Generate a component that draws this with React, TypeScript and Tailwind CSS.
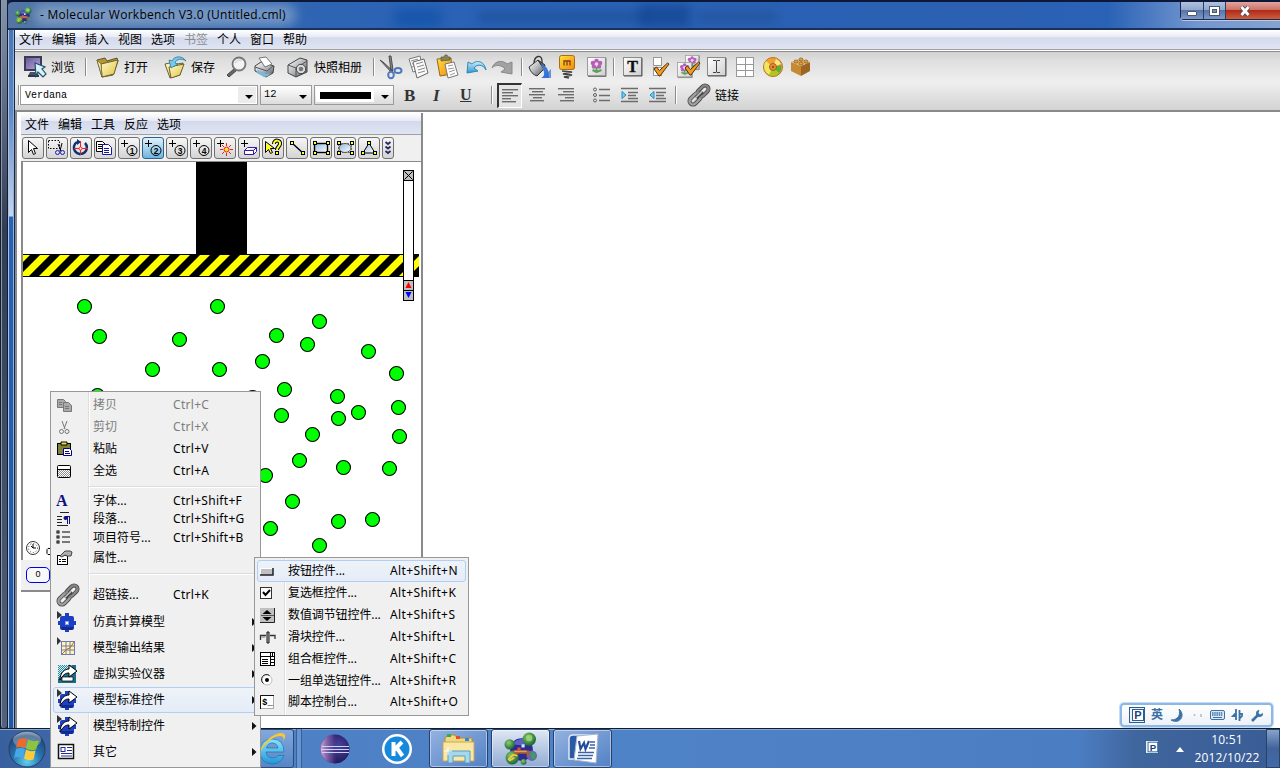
import React from "react";

type IcoProps = { w: number; h: number; children: React.ReactNode; className?: string };
const Ico = ({ w, h, children, className = "" }: IcoProps) => (
  <svg width={w} height={h} viewBox={`0 0 ${w} ${h}`} className={`block shrink-0 overflow-visible ${className}`}>
    {children}
  </svg>
);

const Defs = () => (
  <svg className="absolute h-0 w-0">
    <defs>
      <linearGradient id="folder" x1="0" y1="0" x2="1" y2="1">
        <stop offset="0" stopColor="#fffbd0" />
        <stop offset="1" stopColor="#e2c23c" />
      </linearGradient>
      <linearGradient id="metal" x1="0" y1="0" x2="1" y2="1">
        <stop offset="0" stopColor="#ffffff" />
        <stop offset="0.5" stopColor="#b5b8bc" />
        <stop offset="1" stopColor="#4c5054" />
      </linearGradient>
      <linearGradient id="purple" x1="0" y1="0" x2="1" y2="1">
        <stop offset="0" stopColor="#6a5a9c" />
        <stop offset="1" stopColor="#b7a4dc" />
      </linearGradient>
      <linearGradient id="orange" x1="0" y1="0" x2="1" y2="1">
        <stop offset="0" stopColor="#ffe23c" />
        <stop offset="1" stopColor="#ee8a10" />
      </linearGradient>
      <linearGradient id="sky" x1="0" y1="0" x2="0" y2="1">
        <stop offset="0" stopColor="#c9edfa" />
        <stop offset="1" stopColor="#2f95cf" />
      </linearGradient>
      <linearGradient id="btn" x1="0" y1="0" x2="1" y2="1">
        <stop offset="0" stopColor="#ffffff" />
        <stop offset="1" stopColor="#cfcfcf" />
      </linearGradient>
      <linearGradient id="shape" x1="0" y1="0" x2="1" y2="1">
        <stop offset="0" stopColor="#8fb7dc" />
        <stop offset="1" stopColor="#ffffff" />
      </linearGradient>
      <radialGradient id="orb" cx="0.5" cy="0.85" r="0.9">
        <stop offset="0" stopColor="#5fd0ee" />
        <stop offset="0.45" stopColor="#2473ad" />
        <stop offset="0.8" stopColor="#24497a" />
        <stop offset="1" stopColor="#a9bfd6" />
      </radialGradient>
      <radialGradient id="eclipse" cx="0.6" cy="0.4" r="0.65">
        <stop offset="0" stopColor="#4c43a0" />
        <stop offset="1" stopColor="#1d1655" />
      </radialGradient>
      <linearGradient id="eclipseEdge" x1="0" y1="0" x2="1" y2="0">
        <stop offset="0" stopColor="#d8a6d6" />
        <stop offset="0.4" stopColor="#7a5cae" stopOpacity="0.5" />
        <stop offset="0.6" stopColor="#2a2066" stopOpacity="0" />
      </linearGradient>
      <radialGradient id="green" cx="0.4" cy="0.35" r="0.7">
        <stop offset="0" stopColor="#8ad06a" />
        <stop offset="1" stopColor="#145c34" />
      </radialGradient>
      <linearGradient id="ie" x1="0" y1="0" x2="0" y2="1">
        <stop offset="0" stopColor="#8be3fb" />
        <stop offset="1" stopColor="#2196d8" />
      </linearGradient>
      <pattern id="dots" width="2" height="2" patternUnits="userSpaceOnUse">
        <rect width="1" height="1" fill="#8c8c8c" />
        <rect x="1" y="1" width="1" height="1" fill="#8c8c8c" />
      </pattern>
      <pattern id="tealDots" width="2" height="2" patternUnits="userSpaceOnUse">
        <rect width="2" height="2" fill="#d5edf2" />
        <rect width="1" height="1" fill="#2b8aa5" />
        <rect x="1" y="1" width="1" height="1" fill="#2b8aa5" />
      </pattern>
    </defs>
  </svg>
);

const Molecule = ({ size }: { size: number }) => (
  <svg width={size} height={size} viewBox="0 0 32 32" className="block shrink-0">
    <circle cx="17" cy="17" r="11" fill="#2d2a94" />
    <path d="M8 12a11 11 0 0 1 16-3l-4 4z" fill="#5c62c8" />
    <circle cx="5.500" cy="12" r="5" fill="url(#green)" />
    <circle cx="24.500" cy="7" r="6.500" fill="url(#green)" />
    <circle cx="8" cy="25" r="6.500" fill="url(#green)" />
    <circle cx="27" cy="23" r="5" fill="#6a62b4" />
    <path d="M25 21l3-2 3 3-1 5-3-1z" fill="#3f9c64" />
    <circle cx="19" cy="29" r="2.800" fill="url(#green)" />
    <path d="M8 18h16l2 2h-2v4h-2v-3h-10v3h-2v-4z" fill="#a8602c" />
    <path d="M10 18h12v1.500H10z" fill="#e0a050" />
    <rect x="13" y="15" width="3" height="3" fill="#e54a4a" />
    <rect x="17" y="12" width="3" height="3" fill="#d8e8ff" />
    <path d="M4 27l5-5 4 1M5 28l5-3" stroke="#f2d040" strokeWidth="1.500" fill="none" />
    <circle cx="24.500" cy="6" r="3" fill="#a8dc80" opacity=".7" />
  </svg>
);

const Link = () => (
  <Ico w={24} h={24}>
    <g transform="rotate(-45 12 12)" fill="none">
      <rect x="0" y="8.500" width="13" height="7" rx="3.500" stroke="#4a4a4a" strokeWidth="4" />
      <rect x="11" y="8.500" width="13" height="7" rx="3.500" stroke="#4a4a4a" strokeWidth="4" />
      <rect x="0" y="8.500" width="13" height="7" rx="3.500" stroke="#a0a0a0" strokeWidth="2.400" />
      <rect x="11" y="8.500" width="13" height="7" rx="3.500" stroke="#868686" strokeWidth="2.400" />
      <path d="M8 12h9" stroke="#3e3e3e" strokeWidth="3.400" />
      <path d="M8 11.500h9" stroke="#c4c4c4" strokeWidth="1.500" />
    </g>
  </Ico>
);

const Sep = () => (
  <div className="flex h-[18px]">
    <div className="w-px bg-[#8a8a8a]" />
    <div className="w-px bg-white" />
  </div>
);

const FlowerArt = () => (
  <>
    <rect x=".5" y=".5" width="18" height="18" fill="url(#btn)" stroke="#9b9b9b" />
    <path d="M19 1v18.500H1" stroke="#777" fill="none" />
    <path d="M9.500 10v6M9.500 15l5-2M9.500 15l-4-2" stroke="#5aa356" strokeWidth="2" fill="none" />
    <g fill="#b65fb8">
      <circle cx="9.500" cy="4" r="2.300" />
      <circle cx="6" cy="6" r="2.300" />
      <circle cx="13" cy="6" r="2.300" />
      <circle cx="7" cy="9.500" r="2.300" />
      <circle cx="12" cy="9.500" r="2.300" />
    </g>
    <circle cx="9.500" cy="7" r="1.800" fill="#f0d8f0" />
  </>
);

const Check = () => (
  <path d="M2 12l2.500-2 3 3.500 8-7.500 1.500 1-9 12H7z" fill="#f59a18" stroke="#4a3414" strokeWidth="1" />
);

const song = "font-['Liberation_Sans','Noto_Sans_CJK_SC',sans-serif]";

const MainToolbar = () => (
  <div className="flex h-[30px] items-center pl-[8px] text-[12px] text-black">
    <div className="w-[28px] shrink-0">
      <Ico w={24} h={24}>
        <path d="M1 1h18v15H1z" fill="#393c52" />
        <path d="M3 3h14v11H3z" fill="url(#purple)" />
        <path d="M7 17h7l2 4H5z" fill="#4b5164" />
        <path d="M5 20h11v2H5z" fill="#30364a" />
        <path d="M12 8l10 4-3 2 4 5-3 3-5-5-2 4z" fill="#d6f2fa" stroke="#23506c" strokeWidth="1.200" />
      </Ico>
    </div>
    <span className="w-[34px] shrink-0 pt-[2px]">浏览</span>
    <div className="w-[11px] shrink-0"><Sep /></div>
    <div className="w-[28px] shrink-0">
      <Ico w={24} h={22}>
        <path d="M1 4l8-2 2 3 10-3 1 3-5 14-11 2z" fill="#b8962c" stroke="#5c5328" />
        <path d="M5 8l17-4-4 14-12 3z" fill="url(#folder)" stroke="#6b6030" />
        <path d="M1 4l5 17-1-13z" fill="#f7eeb0" stroke="#6b6030" strokeWidth=".7" />
      </Ico>
    </div>
    <span className="w-[40px] shrink-0 pt-[2px]">打开</span>
    <div className="w-[27px] shrink-0">
      <Ico w={24} h={22}>
        <path d="M1 8l5-1 2 2 11-2-3 12-10 3z" fill="url(#folder)" stroke="#6b6030" />
        <path d="M5 11l15-3-4 11-9 3z" fill="url(#folder)" stroke="#6b6030" />
        <path d="M22 5C18-1 10 0 8 5l-3-1 2 8 7-4-3-1c1-4 7-5 11-2z" fill="#7cc8e8" stroke="#2878a0" strokeWidth=".8" />
      </Ico>
    </div>
    <span className="w-[35px] shrink-0 pt-[2px]">保存</span>
    <div className="w-[28px] shrink-0">
      <Ico w={22} h={22}>
        <path d="M9 12l-8 7 2 2 8-7z" fill="#666" stroke="#444" />
        <circle cx="13" cy="8" r="6.500" fill="#f3f3f3" stroke="#777" strokeWidth="1.800" />
        <path d="M9 7q3-4 7-3" stroke="#c7c7c7" fill="none" />
      </Ico>
    </div>
    <div className="w-[33px] shrink-0">
      <Ico w={22} h={22}>
        <path d="M1 10l6-4 13 4-1 7-7 4-11-6z" fill="url(#metal)" stroke="#444" />
        <path d="M5 2l7-1 6 7-7 3z" fill="#fff" stroke="#777" />
        <path d="M1 11l12 4 6-5" fill="none" stroke="#555" />
        <path d="M4 14l8 4 5-1-3 3-4 1-7-4z" fill="#7bb7d8" />
      </Ico>
    </div>
    <div className="w-[27px] shrink-0">
      <Ico w={22} h={22}>
        <path d="M1 9L13 2l7 2v12l-11 5-8-4z" fill="url(#metal)" stroke="#444" />
        <path d="M1 9l8 3v9M9 12l11-7" stroke="#555" fill="none" />
        <circle cx="14" cy="13" r="4.700" fill="#ddd" stroke="#444" />
        <circle cx="14" cy="13" r="2.300" fill="#777" />
      </Ico>
    </div>
    <span className="w-[59px] shrink-0 pt-[2px]">快照相册</span>
    <div className="w-[6px] shrink-0"><Sep /></div>
    <div className="w-[29px] shrink-0">
      <Ico w={24} h={24}>
        <path d="M1 5l3 2 10 9-2 1zM10 1l2 0 2 14-2 1z" fill="#888" stroke="#444" strokeWidth=".9" />
        <ellipse cx="12" cy="20" rx="2.800" ry="3.300" fill="none" stroke="#5078bc" strokeWidth="2" />
        <ellipse cx="19" cy="15.500" rx="3.500" ry="2.500" fill="none" stroke="#5078bc" strokeWidth="2" />
      </Ico>
    </div>
    <div className="w-[28px] shrink-0">
      <Ico w={22} h={24}>
        <path d="M1 4l11-3 3 13-10 3z" fill="#fafafa" stroke="#777" />
        <path d="M5 7l11-3 4 14-11 5z" fill="#fafafa" stroke="#666" />
        <path d="M8 9l7-2M9 12l7-2M10 15l7-2M10 18l7-2M3 6l7-2M4 9l2-1M4 12l2-1" stroke="#888" />
      </Ico>
    </div>
    <div className="w-[30px] shrink-0">
      <Ico w={24} h={24}>
        <path d="M1 4l14-1 1 16-12 2z" fill="url(#orange)" stroke="#9a6418" />
        <path d="M5 2l3 0 1-2 2 0 1 2 2 0v3l-9 1z" fill="#8a8450" stroke="#555" strokeWidth=".7" />
        <path d="M9 9l9-2 4 13-10 3z" fill="#fff" stroke="#777" />
        <path d="M12 11l5-1M12 14l6-1M13 17l6-2M14 20l5-2" stroke="#999" />
      </Ico>
    </div>
    <div className="w-[25px] shrink-0">
      <Ico w={21} h={16}>
        <path d="M20 11C18 1 10 1 6 5L2 3 1 14l11-2-4-3c3-4 9-4 12 2z" fill="url(#sky)" stroke="#2989b8" />
      </Ico>
    </div>
    <div className="w-[30px] shrink-0">
      <Ico w={22} h={16}>
        <path d="M1 9C4 1 12 1 16 5l5-2v12l-11-2 4-3C11 6 4 5 1 9z" fill="#a2a2a2" stroke="#898989" />
      </Ico>
    </div>
    <div className="w-[7px] shrink-0"><Sep /></div>
    <div className="w-[31px] shrink-0">
      <Ico w={24} h={24}>
        <path d="M6 9C6 0 14-1 14 6v5" fill="none" stroke="#333" strokeWidth="1.300" />
        <path d="M1 12l9-7 6 9-7 7q-6-2-8-9z" fill="url(#metal)" stroke="#333" />
        <path d="M10 5l7 5-1 4z" fill="#666" stroke="#333" />
        <path d="M13 9l5 3q3 3 3 11h-8q5-2 2-9z" fill="#3c78d8" />
        <path d="M23 14v9h-9z" fill="#2f6ed4" opacity=".7" />
      </Ico>
    </div>
    <div className="w-[28px] shrink-0">
      <Ico w={16} h={26}>
        <rect x=".5" y="1.500" width="15" height="14" rx="2" fill="url(#orange)" stroke="#a96a10" />
        <path d="M5 11.500V7h3v4.500M8 7h3v4.500" stroke="#8a3a10" strokeWidth="1.300" fill="none" />
        <path d="M3 17l10 1-9 2 9 1-8 2 5 1" stroke="#444" fill="none" strokeWidth="1.500" />
      </Ico>
    </div>
    <div className="w-[26px] shrink-0"><Ico w={20} h={20}><FlowerArt /></Ico></div>
    <div className="w-[10px] shrink-0"><Sep /></div>
    <div className="w-[29px] shrink-0">
      <Ico w={20} h={20}>
        <rect x=".5" y=".5" width="18" height="18" fill="url(#btn)" stroke="#8a8a8a" />
        <path d="M19 1v18H1" stroke="#555" fill="none" />
        <text x="9.500" y="15" fontSize="16" fontWeight="700" textAnchor="middle" fontFamily="Liberation Serif, serif" fill="#111" stroke="#111" strokeWidth=".4">T</text>
      </Ico>
    </div>
    <div className="w-[25px] shrink-0">
      <Ico w={19} h={20}>
        <rect x="1.500" y=".5" width="8" height="8" fill="#fff" stroke="#999" />
        <rect x="1.500" y="10.500" width="8" height="8" fill="#fff" stroke="#999" />
        <Check />
      </Ico>
    </div>
    <div className="w-[30px] shrink-0">
      <Ico w={24} h={22}>
        <g transform="translate(8 -1) scale(.75)"><FlowerArt /></g>
        <g transform="translate(0 6) scale(.8)"><FlowerArt /></g>
        <g transform="translate(6 0)"><Check /></g>
      </Ico>
    </div>
    <div className="w-[29px] shrink-0">
      <Ico w={20} h={20}>
        <rect x=".5" y=".5" width="18" height="18" fill="url(#btn)" stroke="#8a8a8a" />
        <path d="M19 1v18H1" stroke="#555" fill="none" />
        <path d="M6 3.500h3l.5 1 .5-1h3M6 15.500h3l.5-1 .5 1h3M9.500 4v11" stroke="#444" fill="none" />
      </Ico>
    </div>
    <div className="w-[26px] shrink-0">
      <Ico w={18} h={20} className="[shape-rendering:crispEdges]">
        <rect x=".5" y=".5" width="17" height="19" fill="#fff" stroke="#999" />
        <path d="M9 0v20M0 7h18M0 13h18" stroke="#999" />
      </Ico>
    </div>
    <div className="w-[28px] shrink-0">
      <Ico w={22} h={22}>
        <circle cx="11" cy="11" r="9.500" fill="#f0a030" stroke="#b27818" />
        <path d="M11 11L4 5a9 9 0 0 0 4 14z" fill="#f0e460" />
        <path d="M11 11l-4 8q7 2 10-2z" fill="#a4cc20" />
        <path d="M11 11l8-2q1 5-2 8z" fill="#58b038" />
        <path d="M11 11l3-8q4 2 5 5z" fill="#ffe890" />
        <circle cx="11" cy="11" r="3.500" fill="#e69030" stroke="#a3601c" />
        <circle cx="11" cy="11" r="1.300" fill="#a05018" />
      </Ico>
    </div>
    <Ico w={22} h={20}>
      <path d="M1 5l10 4v10L1 14z" fill="#c68a35" />
      <path d="M11 9l9-4v9l-9 5z" fill="#9c6522" />
      <path d="M1 5l9-3 10 3-9 4z" fill="#e5b462" />
      <g fill="#dca650" stroke="#8c5b20" strokeWidth=".8">
        <ellipse cx="6" cy="4.500" rx="2" ry="1.500" />
        <ellipse cx="11" cy="2.500" rx="2" ry="1.500" />
        <ellipse cx="11" cy="6.500" rx="2" ry="1.500" />
        <ellipse cx="16" cy="4.500" rx="2" ry="1.500" />
      </g>
    </Ico>
  </div>
);

const Caret = () => (
  <Ico w={8} h={4}><path d="M0 0h8l-4 4z" fill="#000" /></Ico>
);

const Lines = ({ kind }: { kind: "left" | "center" | "right" }) => (
  <Ico w={17} h={16}>
    <g fill="#6c6c6c">
      {[16, 11, 16, 9, 14].map((w, i) => (
        <rect key={i} x={kind === "left" ? 0 : kind === "center" ? Math.floor((17 - w) / 2) : 17 - w} y={1 + i * 3} width={w} height="1.400" />
      ))}
    </g>
  </Ico>
);

const FormatToolbar = () => (
  <div className="flex h-[28px] items-center pb-[2px] pl-[3px] text-[12px] text-black">
    <div className="mr-px h-[20px] w-px bg-[#8f8f8f] shadow-[1px_0_0_#fff]" />
    <div className="mr-[2px] flex h-[20px] w-[238px] items-center border border-[#9a9a9a] bg-[#ececec] p-px shadow-[inset_0_0_0_1px_#fff]">
      <div className="flex h-[16px] w-[216px] items-center bg-white pl-[3px] font-['Liberation_Mono',monospace] text-[10px]">Verdana</div>
      <div className="mt-[3px] ml-[7px]"><Caret /></div>
    </div>
    <div className="mr-[2px] flex h-[20px] w-[52px] items-center border border-[#9a9a9a] bg-gradient-to-b from-white to-[#dcdcdc] pl-[3px]">
      <div className="w-[35px] font-['Liberation_Mono',monospace] text-[10.500px]">12</div>
      <div className="mt-[3px]"><Caret /></div>
    </div>
    <div className="mr-[10px] flex h-[20px] w-[80px] items-center border border-[#9a9a9a] bg-gradient-to-b from-white to-[#dcdcdc] p-px">
      <div className="flex h-[14px] w-[58px] items-center bg-white pl-[4px]"><div className="h-[7px] w-[51px] bg-black" /></div>
      <div className="mt-[3px] ml-[7px]"><Caret /></div>
    </div>
    <span className="w-[29px] font-['Liberation_Serif',serif] text-[17px] leading-none font-bold text-[#333]">B</span>
    <span className="w-[27px] font-['Liberation_Serif',serif] text-[17px] leading-none font-bold text-[#333] italic">I</span>
    <span className="w-[31px] font-['Liberation_Serif',serif] text-[16px] leading-none font-bold text-[#333] underline">U</span>
    <div className="w-[6px]"><Sep /></div>
    <div className="mr-[7px] flex h-[25px] w-[25px] items-center border-t-2 border-r border-b border-l-2 border-t-[#333] border-r-white border-b-white border-l-[#333] bg-[#e4e4e4] pl-[3px]"><Lines kind="left" /></div>
    <div className="w-[28px]"><Lines kind="center" /></div>
    <div className="w-[36px]"><Lines kind="right" /></div>
    <div className="w-[28px]">
      <Ico w={17} h={16}>
        <g fill="none" stroke="#5f5f5f"><circle cx="2" cy="2.500" r="1.500" /><circle cx="2" cy="8" r="1.500" /><circle cx="2" cy="13.500" r="1.500" /></g>
        <path d="M6 2.500h11M6 8.500h11M6 13.500h11" stroke="#6c6c6c" strokeWidth="1.400" />
      </Ico>
    </div>
    <div className="w-[28px]">
      <Ico w={17} h={16}>
        <path d="M0 1.500h17M7 5.500h10M7 8.500h8M7 11.500h10M0 14.500h17" stroke="#6c6c6c" strokeWidth="1.300" />
        <path d="M1 4.500v7l4-3.500z" fill="#7ccbf0" stroke="#1d8cc8" />
      </Ico>
    </div>
    <div className="w-[26px]">
      <Ico w={17} h={16}>
        <path d="M0 1.500h17M7 5.500h10M7 8.500h8M7 11.500h10M0 14.500h17" stroke="#6c6c6c" strokeWidth="1.300" />
        <path d="M5 4.500v7l-4-3.500z" fill="#7ccbf0" stroke="#1d8cc8" />
      </Ico>
    </div>
    <div className="w-[12px]"><Sep /></div>
    <div className="w-[28px]"><Link /></div>
    <span className="pt-[2px]">链接</span>
  </div>
);

const Knob = ({ x, y }: { x: number; y: number }) => <rect x={x} y={y} width="3" height="3" fill="#ffff40" stroke="#000" />;

const AddAtom = ({ n }: { n: number }) => (
  <>
    <path d="M2 5.500h7M5.500 2v7" stroke="#000" />
    <circle cx="13" cy="12.500" r="5" fill="none" stroke="#000" />
    <text x="13" y="15.500" fontSize="8.500" fontWeight="700" textAnchor="middle" fontFamily="Liberation Sans, sans-serif">{n}</text>
  </>
);

const tools: React.ReactNode[] = [
  <path d="M5.500 2.500v12l3-3 2 5 2-1-2-5h4z" fill="#fff" stroke="#000" />,
  <>
    <path d="M1.500 2.500h11v8h-11z" fill="none" stroke="#000" strokeDasharray="1.500 1.500" />
    <path d="M11 6l3 7M15 5l-2 8" stroke="#000" />
    <circle cx="10.500" cy="14.500" r="2" fill="none" stroke="#1818b0" /><circle cx="15.500" cy="14.500" r="2" fill="none" stroke="#1818b0" />
  </>,
  <>
    <path d="M6 4a6.500 6.500 0 1 0 8 1" fill="none" stroke="#103070" strokeWidth="2.500" />
    <path d="M6 1v6l4-3z" fill="#103070" />
    <path d="M9.500 3v14M3 10.500h14" stroke="#f02020" /><circle cx="9.500" cy="10.500" r="1.500" fill="#fff" stroke="#f02020" />
  </>,
  <>
    <path d="M1.500 3.500h6l3 3v7h-9z" fill="#fff" stroke="#000" /><path d="M3 6.500h5M3 8.500h5M3 10.500h5" stroke="#000" />
    <path d="M7.500 6.500h6l3 3v7h-9z" fill="#fff" stroke="#1818a0" /><path d="M9 10.500h5M9 12.500h5M9 14.500h5" stroke="#1818a0" />
  </>,
  <AddAtom n={1} />,
  <AddAtom n={2} />,
  <AddAtom n={3} />,
  <AddAtom n={4} />,
  <>
    <path d="M2 5.500h7M5.500 2v7" stroke="#000" /><circle cx="11.500" cy="11.500" r="2.500" fill="#ffe030" stroke="#f02020" />
    <path d="M11.500 5v3M11.500 15v3M5 11.500h3M15 11.500h3M7 7l2 2M16 7l-2 2M7 16l2-2M16 16l-2-2" stroke="#f02020" />
  </>,
  <>
    <path d="M2 5.500h7M5.500 2v7" stroke="#000" />
    <path d="M5.500 12.500l3-3h9v4l-3 3h-9zM5.500 12.500h9l3-3M14.500 12.500v4" fill="#fff" stroke="#3818a8" />
  </>,
  <>
    <path d="M2.500 3.500v11l3-3 2 4 2-1-2-4h4z" fill="#ffff30" stroke="#000" />
    <path d="M11 6c0-5 7-4 6 0 0 2-3 3-3 6" fill="none" stroke="#000" strokeWidth="4" /><path d="M11 6c0-5 7-4 6 0 0 2-3 3-3 6" fill="none" stroke="#ffff30" strokeWidth="2" />
    <rect x="12.500" y="13.500" width="3" height="3" fill="#ffff30" stroke="#000" />
  </>,
  <><path d="M5 5l12 11" stroke="#000" strokeWidth="1.500" /><Knob x={3.500} y={3.500} /><Knob x={14.500} y={13.500} /></>,
  <>
    <rect x="3.500" y="5.500" width="13" height="9" fill="url(#shape)" stroke="#000" strokeWidth="1.400" />
    <Knob x={2.500} y={3.500} /><Knob x={15.500} y={3.500} /><Knob x={2.500} y={13.500} /><Knob x={15.500} y={13.500} />
  </>,
  <>
    <rect x="3.500" y="5.500" width="13" height="9" fill="none" stroke="#000" strokeDasharray="1 2" /><ellipse cx="10" cy="10" rx="6" ry="4.500" fill="url(#shape)" stroke="#555" />
    <Knob x={2.500} y={3.500} /><Knob x={15.500} y={3.500} /><Knob x={2.500} y={13.500} /><Knob x={15.500} y={13.500} />
  </>,
  <>
    <path d="M10 5l6 10H4z" fill="url(#shape)" stroke="#000" /><Knob x={8.500} y={3.500} /><Knob x={2.500} y={13.500} /><Knob x={14.500} y={13.500} />
  </>,
];

const atoms: [number, number][] = [
  [84, 306], [217, 306], [319, 321], [99, 336], [179, 339], [276, 335], [307, 344], [368, 351], [262, 361], [152, 369],
  [219, 369], [396, 373], [284, 389], [337, 396], [97, 395], [252, 397], [398, 407], [358, 412], [281, 415], [338, 418],
  [312, 434], [399, 436], [299, 460], [265, 475], [343, 467], [389, 468], [292, 501], [270, 528], [338, 521], [372, 519], [319, 545],
];

const Simulation = () => (
  <svg width="398" height="398" viewBox="23 162 398 398" className="block">
    <defs>
      <clipPath id="beam"><rect x="23" y="254" width="396" height="23" /></clipPath>
    </defs>
    <rect x="196" y="162" width="51" height="93" fill="#000" />
    <rect x="23" y="254" width="396" height="23" fill="#000" />
    <g clipPath="url(#beam)" fill="#ffff00">
      {Array.from({ length: 22 }, (_, i) => {
        const x = 20 + i * 20;
        return <path key={i} d={`M${x} 255h10l-21 21h-10z`} />;
      })}
    </g>
    {atoms.map(([x, y], i) => (
      <circle key={i} cx={x + 0.5} cy={y + 0.5} r="7" fill="#00ff00" stroke="#000" strokeWidth="1.100" />
    ))}
    <g stroke="#000">
      <rect x="403.500" y="170.500" width="10" height="130" fill="#fff" />
      <rect x="403.500" y="170.500" width="10" height="10" fill="#c0c0c0" />
      <path d="M404.500 171.500l8 8M412.500 171.500l-8 8" />
      <rect x="403.500" y="280.500" width="10" height="10" fill="#c0c0c0" />
      <rect x="403.500" y="290.500" width="10" height="10" fill="#c0c0c0" />
    </g>
    <path d="M408.500 282l3 6h-6z" fill="#f00" />
    <path d="M408.500 298l3-6h-6z" fill="#00f" />
    <circle cx="33" cy="548" r="6.500" fill="#fff" stroke="#333" />
    <circle cx="33" cy="548" r="4.500" fill="none" stroke="#444" strokeDasharray="1 2" />
    <path d="M33 544v4h3M33 548l-2-2" stroke="#000" fill="none" />
    <path d="M50 548.500h-2l-1 1v4l1 1h2" stroke="#000" fill="none" />
  </svg>
);

const menuGradient = "bg-[linear-gradient(to_bottom,#ffffff_0,#e6eaf4_38%,#d4daec_40%,#e0e5f3_100%)]";

const ModelPanel = () => (
  <div className="mt-px flex h-[479px] w-[402px] flex-col border-r-2 border-b-2 border-r-[#8a8a8a] border-b-[#8a8a8a] bg-[#f0f0f0]">
    <div className={`flex h-[22px] shrink-0 items-center border-b border-[#a0a0a0] pt-[3px] pl-[4px] text-[12px] ${menuGradient}`}>
      {["文件", "编辑", "工具", "反应", "选项"].map((t) => <span key={t} className="w-[33px]">{t}</span>)}
    </div>
    <div className="flex h-[26px] shrink-0 items-center gap-[2px] pl-[1px]">
      {tools.map((t, i) => (
        <div key={i} className={`h-[22px] w-[22px] shrink-0 rounded-[3px] border ${i === 5 ? "border-[#2c628b] bg-gradient-to-b from-[#dff1fb] to-[#6db5dd]" : "border-[#707070] bg-gradient-to-b from-[#f6f6f6] to-[#d4d4d4]"}`}>
          <Ico w={20} h={20}>{t}</Ico>
        </div>
      ))}
      <div className="h-[22px] w-[12px] shrink-0 rounded-[3px] border border-[#707070] bg-gradient-to-b from-[#f6f6f6] to-[#d4d4d4]">
        <Ico w={10} h={20}><path d="M2.500 4l2.500 2 2.500-2M2.500 8.500l2.500 2 2.500-2M2.500 13l2.500 2 2.500-2" stroke="#262660" strokeWidth="1.800" fill="none" /></Ico>
      </div>
    </div>
    <div className="h-[399px] shrink-0 border-t border-l-2 border-[#8a8a8a] bg-white"><Simulation /></div>
    <div className="flex flex-1 items-center pl-[5px]">
      <div className="flex h-[16px] w-[24px] items-center justify-center rounded-[5px] border border-[#0000f0] bg-[#f8f8f8] text-[9px]">0</div>
      <div className="h-px w-[10px] bg-[#0000f0]" />
    </div>
  </div>
);

const Gear = () => (
  <>
    <path d="M1 0v8l5-4z" fill="#333" />
    <g fill="#1c3fc4">
      <rect x="4" y="5" width="14" height="14" rx="2" />
      <rect x="9" y="2" width="4" height="19" />
      <rect x="2" y="10" width="18" height="4" />
    </g>
    <path d="M5 16h13l-2 3H6z" fill="#102a90" />
  </>
);
const CurveArrow = () => <path d="M4 17c0-8 5-11 9-11V2l8 6-8 6v-4c-4 0-6 2-9 7z" fill="#fff" stroke="#000" />;

const menuIcons: Record<string, React.ReactNode> = {
  copy: <g stroke="#777" fill="#aaa"><path d="M1.500 2.500h6l2 2v6h-8z" /><path d="M7.500 5.500h5l3 3v6h-8z" /><path d="M9 9.500h4M9 11.500h4M3 5.500h3M3 7.500h3" /></g>,
  cut: <g stroke="#777" fill="none"><path d="M6 2l3 8M11 2L8 10" /><circle cx="5.500" cy="12.500" r="2" /><circle cx="11" cy="12.500" r="2" /></g>,
  paste: <><rect x="1.500" y="2.500" width="13" height="11" fill="#808038" stroke="#000" /><path d="M5 1h6v3H5z" fill="#f0e040" stroke="#000" /><path d="M7.500 7.500h6l2 2v5h-8z" fill="#fff" stroke="#00008b" /><path d="M9 10.500h4M9 12.500h5" stroke="#00008b" /></>,
  all: <><rect x="1.500" y="2.500" width="13" height="12" rx="1" fill="#fff" stroke="#000" /><rect x="2" y="7" width="12" height="7" fill="url(#dots)" /><path d="M2 6.500h12" stroke="#000" /></>,
  font: <text x="0" y="14" fontSize="16" fontWeight="700" fontFamily="Liberation Serif, serif" fill="#101080">A</text>,
  para: <><path d="M4 1.500h9M1 5.500h5M1 8.500h5M1 11.500h5M1 14.500h11" stroke="#222" /><path d="M13.500 5v8M11.500 5v8M14 5.500H9" stroke="#101080" /><circle cx="9.500" cy="7" r="2" fill="#101080" /></>,
  bullets: <g stroke="#000" fill="#fff"><rect x="1" y="2" width="2" height="2" /><rect x="1" y="7" width="2" height="2" /><rect x="1" y="12" width="2" height="2" /><path d="M6 3h8M6 8h8M6 13h8" /></g>,
  props: <><rect x="1.500" y="6.500" width="10" height="9" fill="#fff" stroke="#000" /><path d="M3 10.500h2M6 10.500h4M3 12.500h2M6 12.500h4" stroke="#000" /><path d="M4 7l5-5h5l2 1-1 4h-4l-2-1-3 2z" fill="#b0b0b0" stroke="#444" /></>,
  gear: <><Gear /><rect x="9.500" y="10.500" width="3" height="3" fill="#fff" stroke="#90a0e0" /></>,
  grid: <><path d="M1 0v8l4-4z" fill="#333" /><rect x="5.500" y="4.500" width="13" height="13" fill="#fff4b8" stroke="#7078b0" /><path d="M10 5v12M14 5v12M6 9h12M6 13h12" stroke="#7078b0" /><path d="M6 17l5-5 3-1 4-6" stroke="#b87010" fill="none" /></>,
  instrument: <><rect x="2" y="2" width="18" height="18" fill="#1c6c8c" /><path d="M2 2h14L2 16z" fill="url(#tealDots)" /><path d="M6 14h11v4H6z" fill="#fff" stroke="#000" strokeWidth=".7" /><CurveArrow /></>,
  widget: <><Gear /><CurveArrow /></>,
  doc: <><rect x="2.500" y="3.500" width="15" height="14" fill="#fffff0" stroke="#111" strokeWidth="1.500" /><rect x="5" y="6.500" width="4" height="4" fill="none" stroke="#2028b0" /><path d="M11 6.500h5M11 9.500h5M5 12.500h11M5 15h11" stroke="#2028b0" /></>,
};

type Row = { icon?: string; label?: string; key?: string; h: string; off?: boolean; sub?: boolean; hot?: boolean; line?: boolean };
const contextRows: Row[] = [
  { icon: "copy", label: "拷贝", key: "Ctrl+C", h: "h-[22px]", off: true },
  { icon: "cut", label: "剪切", key: "Ctrl+X", h: "h-[22px]", off: true },
  { icon: "paste", label: "粘贴", key: "Ctrl+V", h: "h-[22px]" },
  { icon: "all", label: "全选", key: "Ctrl+A", h: "h-[22px]" },
  { line: true, h: "h-[9px]" },
  { icon: "font", label: "字体...", key: "Ctrl+Shift+F", h: "h-[19px]" },
  { icon: "para", label: "段落...", key: "Ctrl+Shift+G", h: "h-[18px]" },
  { icon: "bullets", label: "项目符号...", key: "Ctrl+Shift+B", h: "h-[19px]" },
  { icon: "props", label: "属性...", h: "h-[21px]" },
  { line: true, h: "h-[12px]" },
  { icon: "link", label: "超链接...", key: "Ctrl+K", h: "h-[29px]" },
  { icon: "gear", label: "仿真计算模型", h: "h-[26px]", sub: true },
  { icon: "grid", label: "模型输出结果", h: "h-[26px]", sub: true },
  { icon: "instrument", label: "虚拟实验仪器", h: "h-[26px]", sub: true },
  { icon: "widget", label: "模型标准控件", h: "h-[26px]", sub: true, hot: true },
  { icon: "widget", label: "模型特制控件", h: "h-[26px]", sub: true },
  { icon: "doc", label: "其它", h: "h-[26px]", sub: true },
];

const hotRow = "rounded-[3px] border-[#aecff7] bg-gradient-to-b from-[#eff3f9] to-[#e4ecf7]";
const ui = "font-['Noto_Sans','Noto_Sans_CJK_SC',sans-serif] text-[12px] leading-none";

const ContextMenu = () => (
  <div className={`absolute top-[391px] left-[50px] flex h-[377px] w-[211px] flex-col border border-[#979797] bg-[#f0f0f0] bg-[linear-gradient(to_right,transparent_37px,#dedede_37px,#dedede_38px,#fff_38px,#fff_39px,transparent_39px)] px-[2px] pt-[2px] text-black ${ui}`}>
    {contextRows.map((r, i) =>
      r.line ? (
        <div key={i} className={`flex shrink-0 items-center pl-[36px] ${r.h}`}><div className="h-[2px] flex-1 border-t border-b border-t-[#dcdcdc] border-b-white" /></div>
      ) : (
        <div key={i} className={`flex shrink-0 items-center border pl-[2px] ${r.h} ${r.hot ? hotRow : "border-transparent"} ${r.off ? "text-[#7d7d7d]" : ""}`}>
          <div className="flex w-[37px] shrink-0 items-center">
            {r.icon === "link" ? <Link /> : r.sub ? <Ico w={22} h={22}>{menuIcons[r.icon!]}</Ico> : <Ico w={17} h={17}>{menuIcons[r.icon!]}</Ico>}
          </div>
          <span className="w-[80px] shrink-0 whitespace-nowrap">{r.label}</span>
          <span className="flex-1 tracking-[0.300px] whitespace-nowrap">{r.key}</span>
          {r.sub && <Ico w={5} h={8}><path d="M0 0v8l4.500-4z" fill="#111" /></Ico>}
        </div>
      ),
    )}
  </div>
);

const subRows: { label: string; key: string; h: string; icon: React.ReactNode }[] = [
  { label: "按钮控件...", key: "Alt+Shift+N", h: "h-[22px]", icon: <><rect x="2" y="5" width="12" height="7" fill="#c0c0c0" /><path d="M1.500 12V5.500h12" stroke="#fff" fill="none" /><path d="M14 5v7H1" stroke="#222" fill="none" strokeWidth="1.500" /></> },
  { label: "复选框控件...", key: "Alt+Shift+K", h: "h-[22px]", icon: <><rect x="1.500" y="2.500" width="11" height="11" fill="#fff" stroke="#333" /><path d="M4 7l2.500 3L11 5" stroke="#000" strokeWidth="2" fill="none" /></> },
  { label: "数值调节钮控件...", key: "Alt+Shift+S", h: "h-[22px]", icon: <><rect x="1" y="1" width="15" height="15" fill="#c0c0c0" /><path d="M15.500 1v14.500H1" stroke="#222" fill="none" /><path d="M8 3l4.500 4h-9zM8 14l4.500-4h-9z" fill="#000" /><path d="M2 8.500h13" stroke="#555" /></> },
  { label: "滑块控件...", key: "Alt+Shift+L", h: "h-[22px]", icon: <><path d="M1.500 11V6.500H7M11 6.500h5V10" stroke="#333" fill="none" strokeWidth="1.300" /><rect x="2" y="7" width="4" height="2" fill="#aaa" /><path d="M8 3v11h2V3z" fill="#bbb" stroke="#111" /></> },
  { label: "组合框控件...", key: "Alt+Shift+C", h: "h-[22px]", icon: <><rect x="1.500" y="1.500" width="14" height="13" fill="#fff" stroke="#000" /><path d="M1 5.500h14M11.500 2v13M3 8.500h6M3 10.500h6M3 12.500h6M13.500 2v3M12 8.500h3M12 11.500h3" stroke="#000" /></> },
  { label: "一组单选钮控件...", key: "Alt+Shift+R", h: "h-[21px]", icon: <><circle cx="8" cy="8" r="5" fill="#fff" stroke="#bbb" /><path d="M4.500 11.500a5 5 0 0 1 6-8" stroke="#222" fill="none" /><circle cx="8" cy="8" r="2" fill="#000" /></> },
  { label: "脚本控制台...", key: "Alt+Shift+O", h: "h-[22px]", icon: <><rect x="1.500" y="1.500" width="13" height="13" fill="#fff" stroke="#aaa" /><path d="M1.500 15V1.500H15" stroke="#111" fill="none" /><text x="3" y="11" fontSize="9" fontWeight="700" fontFamily="Liberation Mono, monospace">$_</text></> },
];

const SubMenu = () => (
  <div className={`absolute top-[557px] left-[254px] flex h-[159px] w-[215px] flex-col border border-[#979797] bg-[#f0f0f0] bg-[linear-gradient(to_right,transparent_29px,#dedede_29px,#dedede_30px,#fff_30px,#fff_31px,transparent_31px)] px-[2px] pt-[2px] text-black ${ui}`}>
    {subRows.map((r, i) => (
      <div key={r.label} className={`flex shrink-0 items-center border pl-[1px] ${r.h} ${i === 0 ? hotRow : "border-transparent"}`}>
        <div className="w-[29px] shrink-0"><Ico w={17} h={17}>{r.icon}</Ico></div>
        <span className="w-[102px] shrink-0 tracking-[-0.100px] whitespace-nowrap">{r.label}</span>
        <span className="tracking-[0.400px] whitespace-nowrap">{r.key}</span>
      </div>
    ))}
  </div>
);

const PIcon = ({ size }: { size: number }) => (
  <svg width={size} height={size} viewBox="0 0 16 16" className="block">
    <rect x=".5" y=".5" width="15" height="15" fill="#e9f1fa" stroke="#2c5c94" />
    <rect x="3.500" y="2.500" width="11" height="11" fill="#fff" stroke="#2c5c94" />
    <text x="9" y="12" fontSize="11" fontWeight="700" textAnchor="middle" fontFamily="Liberation Sans, sans-serif" fill="#1c447c">P</text>
  </svg>
);

const LanguageBar = () => (
  <div className={`absolute top-[703px] left-[1120px] flex h-[24px] w-[153px] items-center rounded-[4px] border-2 border-[#8db7e4] bg-gradient-to-b from-white to-[#edf1f6] pl-[7px] text-[#3a6ea5] shadow-[0_0_0_1px_#c3dbf3] ${ui}`}>
    <div className="w-[22px]"><PIcon size={16} /></div>
    <span className="w-[20px] font-bold">英</span>
    <div className="w-[22px]"><Ico w={13} h={13}><path d="M8 0c7 6 1 16-8 11 7 0 10-5 8-11z" fill="#3d70a4" stroke="#3d70a4" /></Ico></div>
    <div className="w-[17px]"><Ico w={10} h={6}><circle cx="1.500" cy="3" r="1" fill="#a8bcd0" /><path d="M8 2v3" stroke="#a8bcd0" strokeWidth="1.500" /></Ico></div>
    <div className="w-[22px]"><Ico w={15} h={10}><rect x=".5" y=".5" width="14" height="9" rx="1.500" fill="#dce9f5" stroke="#3d70a4" /><path d="M2 3h11M2 5h11" stroke="#3d70a4" strokeDasharray="1.500 .7" strokeWidth="1.300" /><path d="M3 7.500h9" stroke="#3d70a4" /></Ico></div>
    <div className="w-[19px]"><Ico w={12} h={12}><path d="M4 0v11M4 4L1 7h3M7.500 1v11M7.500 5H10v2L8 9" stroke="#3d70a4" strokeWidth="1.800" fill="none" /></Ico></div>
    <Ico w={13} h={13}><path d="M1 12l6-6" stroke="#3d70a4" strokeWidth="2.600" /><path d="M12 4a3.500 3.500 0 1 1-3.500-3L7.500 4l1.500 1.500z" fill="#3d70a4" /></Ico>
  </div>
);

const taskButton = "flex h-[39px] w-[59px] shrink-0 items-center justify-center rounded-[3px] border border-[#263f6c] shadow-[inset_0_0_0_1px_rgba(255,255,255,0.450)]";

const Taskbar = () => (
  <div className="flex h-[40px] items-center border-t border-[#101c30] bg-[linear-gradient(to_right,#38609f_0,#3f68a8_60px,#4d80c4_255px,#4f83c8_620px,#4b7dc2_1080px,#40669e_1135px,#395c95_1280px)] shadow-[inset_0_1px_0_#8ba9d2]">
    <div className="w-[255px] shrink-0 pl-[8px]">
      <Ico w={38} h={38}>
        <circle cx="19" cy="19" r="18" fill="url(#orb)" stroke="#28405f" />
        <ellipse cx="19" cy="10" rx="14" ry="8" fill="#fff" opacity=".28" />
        <path d="M10 10q4-3 9-1l-2 9q-5-2-9 0z" fill="#ed6a2c" />
        <path d="M20 9.500q5 3 11 1l-3 9q-5 2-10-1z" fill="#8cc63e" />
        <path d="M8 19q4-2 9 0l-2 9q-5-2-9 0z" fill="#45a8e8" />
        <path d="M18 19.500q5 3 9.500 1l-2 9q-5 2-9.500-1z" fill="#fbcb3b" />
      </Ico>
    </div>
    <div className="flex h-[39px] w-[39px] shrink-0 items-center rounded-r-[3px] border border-[#2c4a7e] bg-gradient-to-b from-[#83a8dc] to-[#5785c6]">
      <Ico w={32} h={32}>
        <path d="M28 19H10q1 6 7 6 4 0 5-2.500h6Q25 31 16 31 4 30 4 18 5 6 16 6q12 0 12 13zM10.500 15H22q-1-5-6-5-4 0-5.500 5z" fill="url(#ie)" stroke="#1876ae" strokeWidth=".7" />
        <path d="M1 23Q-2 30 5 28 1 26 6 16 16 2 25 3q4 1 2 6 5-8-1-9Q12 0 1 23z" fill="#f6c832" />
      </Ico>
    </div>
    <div className="ml-[2px] h-[39px] w-[6px] border-x border-[#36619f] bg-[#6a94d0]" />
    <div className="ml-[17px] w-[62px] shrink-0">
      <Ico w={32} h={32}>
        <circle cx="16" cy="16" r="14.500" fill="url(#eclipse)" /><circle cx="16" cy="16" r="14.500" fill="url(#eclipseEdge)" />
        <path d="M3 13.500h27M2 16.500h28M3 19.500h27" stroke="#c7d4f4" />
      </Ico>
    </div>
    <div className="w-[48px] shrink-0">
      <Ico w={32} h={32}>
        <circle cx="16" cy="16" r="15" fill="#fff" /><circle cx="16" cy="16" r="12.500" fill="#1689dc" />
        <path d="M12.500 9v14M21 9l-7.500 7.500M15.500 14.500l6 8.500" stroke="#fff" strokeWidth="4" fill="none" />
      </Ico>
    </div>
    <div className={`${taskButton} mr-[3px] bg-gradient-to-br from-[#94b2e0] to-[#5281c4]`}>
      <Ico w={34} h={32}>
        <path d="M3 5l3-3h7l2 3h15v22H3z" fill="#f4d67c" stroke="#b08c38" />
        <rect x="5" y="1" width="4" height="3" fill="#28b050" /><rect x="14" y="3" width="4" height="3" fill="#e05030" /><rect x="23" y="5" width="4" height="3" fill="#3088d8" />
        <path d="M1 9h31v19H1z" fill="#f9e7a4" stroke="#c8a858" />
        <path d="M6 30V18h22v12h-5v-7H11v7z" fill="#a4d8ef" stroke="#5a9cc0" />
        <path d="M6 14v8M2 18h8" stroke="#fff" />
      </Ico>
    </div>
    <div className={`${taskButton} mr-[3px] bg-gradient-to-b from-[#dfe7f3] to-[#91acd3]`}><Molecule size={33} /></div>
    <div className={`${taskButton} bg-gradient-to-br from-[#94b2e0] to-[#5281c4]`}>
      <Ico w={32} h={32}>
        <path d="M2 6q0-4 4-4h16v24H2z" fill="#2b5aa4" stroke="#dfe9f8" strokeWidth="1.500" />
        <path d="M10 3l21-2-2 29-22-3z" fill="#fff" stroke="#a7b6cf" />
        <path d="M12 8l1.500 8 3.500-6 1.500 6 3.500-8" stroke="#234f9a" strokeWidth="2.200" fill="none" />
        <path d="M23 9h5M23 12h5M22 15h6M11 19.500h16M11 22.500h15M10 25.500h15" stroke="#3b63a8" strokeWidth="1.500" />
      </Ico>
    </div>
    <div className="ml-auto w-[31px] shrink-0 pb-[4px]"><PIcon size={14} /></div>
    <div className="w-[18px] shrink-0 pt-[1px]"><Ico w={8} h={5}><path d="M0 5h8L4 0z" fill="#fff" /></Ico></div>
    <div className="flex w-[66px] shrink-0 flex-col items-center font-['Open_Sans',sans-serif] text-[12px] leading-[18px] tracking-[0.150px] whitespace-nowrap text-white">
      <span>10:51</span><span>2012/10/22</span>
    </div>
    <div className="ml-[6px] h-[39px] w-[14px] shrink-0 border border-[#2b4266] bg-gradient-to-b from-[#88a3cb] via-[#41639b] to-[#426aa9]" />
  </div>
);

const TitleBar = () => (
  <div className="relative flex h-[30px] shrink-0 items-center overflow-hidden rounded-tl-[5px] border-t-2 border-b-2 border-t-[#0c1838] border-b-[#1c3159] bg-[linear-gradient(to_right,#5576a4_0,#476fa9_60px,#2e64b3_310px,#2a62b6_460px,#2b60b2_1000px,#2a62b6_1100px,#7397cf_1190px,#86a2cf_1272px)] pl-[7px]">
    <div className="absolute top-[2px] left-[26px] h-[22px] w-[262px] rounded-full bg-[#9eb7d3] opacity-60 blur-[6px]" />
    <div className="absolute top-[6px] left-[385px] h-[20px] w-[50px] rounded-full bg-[#0e50a8] opacity-60 blur-[5px]" />
    <div className="absolute top-[9px] left-[470px] h-[12px] w-[170px] bg-[#184a90] opacity-50 blur-[5px]" />
    <div className="absolute top-[3px] left-[632px] h-[22px] w-[50px] bg-[#0f3f8c] opacity-60 blur-[5px]" />
    <div className="absolute top-[9px] left-[690px] h-[12px] w-[78px] bg-[#1b4a8c] opacity-40 blur-[5px]" />
    <div className="relative"><Molecule size={17} /></div>
    <span className="relative ml-[8px] font-['Open_Sans',sans-serif] text-[12px] tracking-[0.270px] whitespace-nowrap text-black">- Molecular Workbench V3.0 (Untitled.cml)</span>
    <div className="relative ml-auto flex h-[18px] w-[100px] shrink-0 self-start rounded-bl-[4px] border-b border-l border-[#1d2b49] shadow-[0_1px_0_#b8cbe5]">
      <div className="flex w-[23px] items-center justify-center border-r border-[#2c3f66] bg-[linear-gradient(#b0c1de_0,#91a9cf_45%,#5774a8_50%,#7e9aca_100%)] pt-[5px]"><div className="h-[5px] w-[10px] rounded-[1px] border border-[#4c5770] bg-white" /></div>
      <div className="flex w-[22px] items-center justify-center border-r border-[#2c3f66] bg-[linear-gradient(#b0c1de_0,#91a9cf_45%,#5774a8_50%,#7e9aca_100%)]"><div className="flex h-[10px] w-[11px] items-center justify-center border border-[#4c5770] bg-white"><div className="h-[4px] w-[5px] border border-[#4c5770] bg-[#7892bf]" /></div></div>
      <div className="flex flex-1 items-center bg-[linear-gradient(#e0a69f_0,#cd7366_45%,#b02c18_50%,#cf5c3e_100%)] pl-[14px]">
        <Ico w={10} h={10}><path d="M1.500 1l7 8M8.500 1l-7 8" stroke="#4c4f63" strokeWidth="4.500" /><path d="M1.500 1l7 8M8.500 1l-7 8" stroke="#fff" strokeWidth="2.700" /></Ico>
      </div>
    </div>
  </div>
);

export default function App() {
  return (
    <div className={`relative flex h-[768px] w-[1280px] flex-col overflow-hidden bg-[#16233f] ${song}`}>
      <Defs />
      <div className="flex h-[728px] shrink-0">
        <div className="w-[8px] shrink-0 rounded-b-[3px] border-r border-l border-[#151c2b] bg-[linear-gradient(to_bottom,#8194b0_0,#65718a_90px,#303d55_230px,#53627c_728px)] shadow-[inset_1px_0_0_#8c97ab]" />
        <div className="flex min-w-0 flex-1 flex-col">
          <TitleBar />
          <div className="flex flex-1">
            <div className="w-[7px] shrink-0 border-r border-l border-r-[#14284d] border-l-[#a6c3e8] bg-[linear-gradient(to_bottom,#4b76b3_0,#5e87c2_80px,#c8d5eb_186px,#2a62b4_187px,#2356a1_100%)] shadow-[inset_-1px_0_0_#8eb2df]" />
            <div className="flex min-w-0 flex-1 flex-col bg-white">
              <div className={`flex h-[20px] shrink-0 items-center border-b border-[#a0a0a0] pt-px pl-[4px] text-[12px] text-black ${menuGradient}`}>
                {["文件", "编辑", "插入", "视图", "选项", "书签", "个人", "窗口", "帮助"].map((t) => (
                  <span key={t} className={`w-[33px] ${t === "书签" ? "text-[#8c8c8c]" : ""}`}>{t}</span>
                ))}
              </div>
              <div className="mt-px shrink-0 border-t border-b-2 border-t-[#8d8d8d] border-b-[#8a8a8a] bg-[linear-gradient(to_bottom,#d2d2d2_0,#dedede_8px,#efefef_30px,#d3d3d3_100%)]">
                <MainToolbar />
                <FormatToolbar />
              </div>
              <div className="flex-1 border-l-2 border-[#8a8a8a] pl-[4px]">
                <ModelPanel />
              </div>
            </div>
          </div>
        </div>
      </div>
      <Taskbar />
      <ContextMenu />
      <SubMenu />
      <LanguageBar />
    </div>
  );
}
